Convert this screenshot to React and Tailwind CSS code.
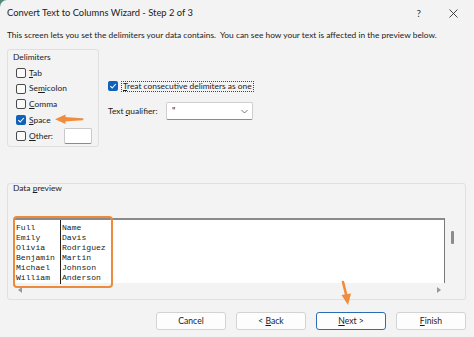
import React from "react";

const ui = { fontFamily: 'Lato, "Noto Sans", sans-serif' };
const mono = { fontFamily: '"Liberation Mono", "Courier New", monospace' };

function Check({ checked }) {
  if (checked) {
    return (
      <span className="w-[10px] h-[10px] rounded-[2px] bg-[#0f62b8] flex items-center justify-center shrink-0">
        <svg width="8" height="8" viewBox="0 0 8 8">
          <path d="M1.3 4.2 L3.2 6 L6.8 2" fill="none" stroke="#fff" strokeWidth="1.1" />
        </svg>
      </span>
    );
  }
  return <span className="w-[10px] h-[10px] rounded-[2px] border border-[#4a4a4a] bg-[#fafafa] shrink-0" />;
}

// label with one underlined mnemonic letter
function Mn({ pre = "", u, post = "" }) {
  return (
    <span className="whitespace-nowrap">
      {pre}
      <span className="underline underline-offset-[1px]">{u}</span>
      {post}
    </span>
  );
}

const rows = [
  ["Full", "Name"],
  ["Emily", "Davis"],
  ["Olivia", "Rodriguez"],
  ["Benjamin", "Martin"],
  ["Michael", "Johnson"],
  ["William", "Anderson"],
];

export default function App() {
  return (
    <div className="w-[474px] h-[337px] bg-[#4f8a78] overflow-hidden">
      <div className="relative w-full h-full bg-[#f3f3f3] rounded-tl-[7px] flex flex-col text-[#1b1b1b]" style={ui}>
        {/* title bar */}
        <div className="h-[26px] flex items-center pl-[7px]">
          <span className="text-[9.35px]">Convert Text to Columns Wizard - Step 2 of 3</span>
          <span className="ml-auto text-[10px] text-[#333]">?</span>
          <svg className="ml-[28px] mr-[16px]" width="9" height="9" viewBox="0 0 9 9">
            <path d="M0.5 0.5 L8.5 8.5 M8.5 0.5 L0.5 8.5" stroke="#333" strokeWidth="0.9" />
          </svg>
        </div>

        {/* description */}
        <div className="mt-[3px] pl-[7px] text-[8.4px] leading-[12px] whitespace-nowrap">
          This screen lets you set the delimiters your data contains.&nbsp; You can see how your text is affected in the preview below.
        </div>

        {/* delimiters + options */}
        <div className="mt-[8px] flex">
          <div className="ml-[7px] w-[92px] h-[98px] border border-[#e0e0e0] rounded-[3px] pl-[8px] text-[8.4px]">
            <div className="leading-[12px] mt-[1px] -ml-[3px]">Delimiters</div>
            <div className="mt-[2px] flex flex-col">
              <div className="h-[15.75px] flex items-center gap-[3px]">
                <Check />
                <Mn u="T" post="ab" />
              </div>
              <div className="h-[15.75px] flex items-center gap-[3px]">
                <Check />
                <Mn pre="Se" u="m" post="icolon" />
              </div>
              <div className="h-[15.75px] flex items-center gap-[3px]">
                <Check />
                <Mn u="C" post="omma" />
              </div>
              <div className="h-[15.75px] flex items-center gap-[3px]">
                <Check checked />
                <Mn u="S" post="pace" />
              </div>
              <div className="h-[15.75px] flex items-center gap-[3px]">
                <Check />
                <Mn u="O" post="ther:" />
                <span className="ml-auto mr-[6px] w-[28px] h-[16px] bg-white border border-[#c9c9c9] border-b-[#8a8a8a] rounded-[2px]" />
              </div>
            </div>
          </div>

          <div className="ml-[9px] flex flex-col text-[8.4px]">
            <div className="mt-[31px] h-[12px] flex items-center gap-[3px]">
              <Check checked />
              <span className="border border-dotted border-[#444] px-[1px] leading-[9px] h-[11px]">
                <Mn u="T" post="reat consecutive delimiters as one" />
              </span>
            </div>
            <div className="mt-[10px] h-[18px] flex items-center">
              <span className="w-[58px]">
                <Mn pre="Text " u="q" post="ualifier:" />
              </span>
              <div className="w-[87px] h-[18px] bg-white border border-[#cfcfcf] border-b-[#8a8a8a] rounded-[2px] flex items-center pl-[5px] pr-[4px]">
                <span className="text-[9px]">"</span>
                <svg className="ml-auto" width="7" height="5" viewBox="0 0 7 5">
                  <path d="M0.5 1 L3.5 4 L6.5 1" fill="none" stroke="#555" strokeWidth="0.8" />
                </svg>
              </div>
            </div>
          </div>
        </div>

        {/* data preview */}
        <div className="mt-[36px] ml-[7px] w-[459px] h-[117px] border border-[#e0e0e0] rounded-[3px] pl-[6px] flex flex-col">
          <div className="text-[8.4px] leading-[8px] mt-[0px] -ml-[1px]">
            Data <Mn u="p" post="review" />
          </div>
          <div className="mt-[26px] flex">
            <div className="w-[431px] h-[65px] bg-white border-t-2 border-r border-[#7a7a7a] border-t-[#8a8a8a] flex pt-[3px] pl-[2px] text-[8.1px] leading-[10px] text-[#222]" style={mono}>
              <div className="w-[44px]">
                {rows.map((r) => (
                  <div key={r[0]}>{r[0]}</div>
                ))}
              </div>
              <div className="-mt-[3px] w-px h-[64px] bg-[#222]" />
              <div className="pl-[1px]">
                {rows.map((r) => (
                  <div key={r[1]}>{r[1]}</div>
                ))}
              </div>
            </div>
            <div className="w-[15px] h-[65px] flex justify-center pt-[13px]">
              <span className="w-[3px] h-[13px] rounded-[1px] bg-[#8c8c8c]" />
            </div>
          </div>
          <div className="h-[13px] w-[431px] flex items-center pl-[4px] pr-[4px]">
            <svg width="4" height="6" viewBox="0 0 4 6">
              <path d="M4 0 L0 3 L4 6 Z" fill="#9a9a9a" />
            </svg>
            <svg className="ml-auto" width="4" height="6" viewBox="0 0 4 6">
              <path d="M0 0 L4 3 L0 6 Z" fill="#9a9a9a" />
            </svg>
          </div>
        </div>

        {/* buttons */}
        <div className="mt-[12px] flex justify-end gap-[10px] pr-[8px] text-[8.6px]">
          <button className="w-[70px] h-[18px] bg-[#fdfdfd] border border-[#d3d3d3] rounded-[3px] flex items-center justify-center">
            Cancel
          </button>
          <button className="w-[70px] h-[18px] bg-[#fdfdfd] border border-[#d3d3d3] rounded-[3px] flex items-center justify-center">
            <Mn pre="< " u="B" post="ack" />
          </button>
          <button className="w-[70px] h-[18px] bg-[#fdfdfd] border border-[#2a6db3] rounded-[3px] flex items-center justify-center">
            <Mn u="N" post="ext >" />
          </button>
          <button className="w-[70px] h-[18px] bg-[#fdfdfd] border border-[#d3d3d3] rounded-[3px] flex items-center justify-center">
            <Mn u="F" post="inish" />
          </button>
        </div>

        {/* annotations */}
        <div className="absolute left-[13px] top-[216px] w-[100px] h-[72px] border-2 border-[#ec8a3e] rounded-[4px]" />
        <svg className="absolute left-[54px] top-[113px]" width="30" height="13" viewBox="0 0 30 13">
          <path d="M28.5 6.2 L10 5 L10 7.6 Z" fill="#f08c3c" stroke="#f08c3c" strokeWidth="2" strokeLinejoin="round" />
          <path d="M1 6.3 L11.5 1.5 L11.5 11 Z" fill="#f08c3c" />
        </svg>
        <svg className="absolute left-[336px] top-[280px]" width="18" height="27" viewBox="0 0 18 27">
          <path d="M7 2 L10.5 16" stroke="#f08c3c" strokeWidth="2.6" strokeLinecap="round" />
          <path d="M12 25 L5.5 15 L15 13.5 Z" fill="#f08c3c" />
        </svg>
      </div>
    </div>
  );
}
